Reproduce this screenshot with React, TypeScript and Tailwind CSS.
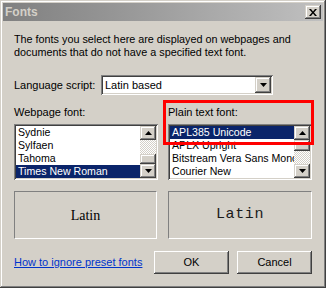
import React from "react";

const raised =
  "shadow-[inset_-1px_-1px_#404040,inset_1px_1px_#d4d0c8,inset_-2px_-2px_#808080,inset_2px_2px_#ffffff]";
const pushRaised =
  "shadow-[inset_-1px_-1px_#404040,inset_1px_1px_#ffffff,inset_-2px_-2px_#808080,inset_2px_2px_#d4d0c8]";
const sunken =
  "shadow-[inset_1px_1px_#808080,inset_-1px_-1px_#ffffff,inset_2px_2px_#404040,inset_-2px_-2px_#d4d0c8]";
const checker =
  "bg-[image:repeating-conic-gradient(#ffffff_0%_25%,#d4d0c8_0%_50%)] bg-[length:2px_2px]";

function Arrow({ down }: { down?: boolean }) {
  return (
    <svg width="7" height="4" viewBox="0 0 7 4" className="block">
      {down ? <path d="M0 0h7L3.5 4z" fill="#000" /> : <path d="M0 4h7L3.5 0z" fill="#000" />}
    </svg>
  );
}

function ScrollButton({ down }: { down?: boolean }) {
  return (
    <div className={`h-[14px] w-[16px] bg-[#d4d0c8] flex items-center justify-center ${raised}`}>
      <Arrow down={down} />
    </div>
  );
}

function ListBox({
  items,
  selected,
  thumbTop,
}: {
  items: string[];
  selected: number;
  thumbTop: boolean;
}) {
  return (
    <div className={`h-[56px] bg-white p-[2px] flex ${sunken}`}>
      <div className="flex-1 overflow-hidden text-[10.6px]">
        {items.map((item, i) => (
          <div
            key={item}
            className={`h-[13px] leading-[13px] pl-[2px] whitespace-nowrap ${
              i === selected ? "bg-[#0a246a] text-white" : "text-black"
            }`}
          >
            {item}
          </div>
        ))}
      </div>
      <div className="w-[16px] flex flex-col">
        <ScrollButton />
        <div className={`flex-1 flex flex-col ${checker}`}>
          {thumbTop ? (
            <>
              <div className={`h-[11px] bg-[#d4d0c8] ${raised}`} />
              <div className="flex-1" />
            </>
          ) : (
            <>
              <div className="flex-1" />
              <div className={`h-[10px] bg-[#d4d0c8] ${raised}`} />
            </>
          )}
        </div>
        <ScrollButton down />
      </div>
    </div>
  );
}

function DropButton() {
  return (
    <div className={`h-[16px] w-[16px] bg-[#d4d0c8] flex items-center justify-center ${raised}`}>
      <Arrow down />
    </div>
  );
}

export default function App() {
  return (
    <div
      className={`relative w-[326px] h-[288px] bg-[#d4d0c8] p-[3px] flex flex-col text-[11px] text-black font-['Liberation_Sans',Arial,sans-serif] ${raised}`}
    >
      {/* Title bar */}
      <div className="h-[18px] flex items-center justify-between pl-[2px] pr-[2px] bg-gradient-to-r from-[#808080] to-[#c0c0c0]">
        <span className="text-[12px] font-bold text-[#d4d0c8] leading-none">Fonts</span>
        <div className={`w-[16px] h-[14px] bg-[#d4d0c8] flex items-center justify-center ${raised}`}>
          <svg width="8" height="7" viewBox="0 0 8 7" className="block">
            <path d="M0 0h2l2 2.5L6 0h2L5 3.5 8 7H6L4 4.5 2 7H0l3-3.5z" fill="#000" />
          </svg>
        </div>
      </div>

      {/* Body */}
      <div className="flex-1 px-[11px] pt-[12px] pb-[11px] flex flex-col">
        <p className="leading-[13px] text-[10.8px]">
          The fonts you select here are displayed on webpages and
          <br />
          documents that do not have a specified text font.
        </p>

        <div className="mt-[16px] h-[20px] flex items-center">
          <span className="w-[87px]">Language script:</span>
          <div className={`w-[172px] h-[20px] bg-white p-[2px] flex items-center ${sunken}`}>
            <span className="flex-1 pl-[2px]">Latin based</span>
            <DropButton />
          </div>
        </div>

        <div className="mt-[11px] grid grid-cols-[144px_144px] gap-x-[10px]">
          <div>
            <div className="leading-[13px] h-[13px]">Webpage font:</div>
            <div className="mt-[5px]">
              <ListBox
                items={["Sydnie", "Sylfaen", "Tahoma", "Times New Roman"]}
                selected={3}
                thumbTop={false}
              />
            </div>
          </div>
          <div>
            <div className="leading-[13px] h-[13px]">Plain text font:</div>
            <div className="mt-[5px]">
              <ListBox
                items={["APL385 Unicode", "APLX Upright", "Bitstream Vera Sans Mono", "Courier New"]}
                selected={0}
                thumbTop={true}
              />
            </div>
          </div>
        </div>

        <div className="mt-[11px] grid grid-cols-[143px_144px] gap-x-[11px]">
          <div className="h-[48px] border border-t-[#808080] border-l-[#808080] border-b-white border-r-white flex items-center justify-center">
            <span className="text-[14px] font-['Liberation_Serif','Times_New_Roman',serif]">Latin</span>
          </div>
          <div className="h-[48px] border border-t-[#808080] border-l-[#808080] border-b-white border-r-white flex items-center justify-center">
            <span className="text-[15px] tracking-[0.6px] font-['Liberation_Mono','Courier_New',monospace] text-[#1a1a1a]">
              Latin
            </span>
          </div>
        </div>

        <div className="mt-[12px] h-[23px] flex items-center">
          <a href="#" className="flex-1 text-[#0033cc] underline leading-none">
            How to ignore preset fonts
          </a>
          <button className={`w-[75px] h-[23px] bg-[#d4d0c8] ${pushRaised}`}>OK</button>
          <button className={`ml-[8px] w-[75px] h-[23px] bg-[#d4d0c8] ${pushRaised}`}>Cancel</button>
        </div>
      </div>

      {/* Annotation highlight */}
      <div className="absolute left-[163px] top-[100px] w-[151px] h-[45px] border-[3px] border-[#ff0000]" />
    </div>
  );
}
